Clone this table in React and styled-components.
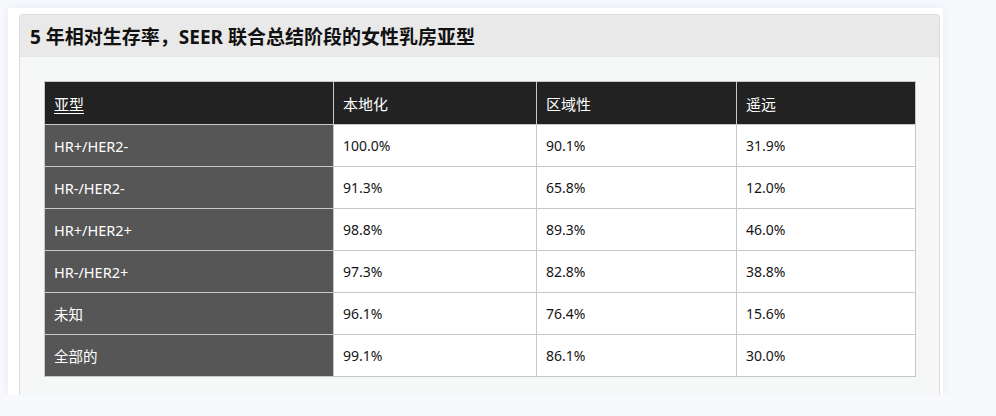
import React from 'react'
import styled, { createGlobalStyle } from 'styled-components'

const GlobalStyle = createGlobalStyle`
	body {
		margin: 0;
		background: #f8f9fd;
		font-family: "Noto Sans", "Noto Sans CJK SC", sans-serif;
	}
`

const Page = styled.div`
	padding: 8px 0 0 8px;
`

const Card = styled.div`
	width: 935px;
	box-sizing: border-box;
	background: #fff;
	padding: 6px 3px 0 11px;
	box-shadow: 0 0 8px rgba(200, 205, 220, 0.35);
`

const Panel = styled.div`
	border: 1px solid #dcdcdc;
	border-bottom: none;
	border-radius: 4px 4px 0 0;
	background: #f6f7f7;
`

const PanelHeader = styled.div`
	height: 42px;
	display: flex;
	align-items: center;
	padding: 0 10px;
	background: #e9e9e9;
	border-radius: 4px 4px 0 0;
`

const Title = styled.h3`
	margin: 0;
	font-size: 19px;
	font-weight: 700;
	color: #111;
	font-family: "Noto Sans", "Noto Sans CJK SC", sans-serif;
`

const PanelBody = styled.div`
	padding: 24px 24px 18px 24px;
`

const Table = styled.table`
	width: 871px;
	border-collapse: collapse;
	table-layout: fixed;
	border: 1px solid #c8c8c8;
`

const Th = styled.th`
	height: 42px;
	padding: 0 9px;
	text-align: left;
	font-weight: 400;
	font-size: 15px;
	color: #fff;
	background: #222;
	border: 1px solid #c8c8c8;
`

const HeadLink = styled.span`
	text-decoration: underline;
	text-underline-offset: 3px;
`

const Cell = styled.td`
	height: 41px;
	padding: 0 9px;
	font-size: ${p => (p.$label ? '14.5px' : '14px')};
	color: ${p => (p.$label ? '#fff' : '#151515')};
	background: ${p => (p.$label ? '#565656' : '#fff')};
	border: 1px solid #c8c8c8;
`

const columns = [289, 203, 200, 179]

const rows = [
	['HR+/HER2-', '100.0%', '90.1%', '31.9%'],
	['HR-/HER2-', '91.3%', '65.8%', '12.0%'],
	['HR+/HER2+', '98.8%', '89.3%', '46.0%'],
	['HR-/HER2+', '97.3%', '82.8%', '38.8%'],
	['未知', '96.1%', '76.4%', '15.6%'],
	['全部的', '99.1%', '86.1%', '30.0%'],
]

const App = () => {
	return (
		<>
			<GlobalStyle />
			<Page>
				<Card>
					<Panel>
						<PanelHeader>
							<Title>5 年相对生存率，SEER 联合总结阶段的女性乳房亚型</Title>
						</PanelHeader>
						<PanelBody>
							<Table>
								<colgroup>
									{columns.map((w, i) => <col key={i} style={{ width: w }} />)}
								</colgroup>
								<thead>
									<tr>
										<Th><HeadLink>亚型</HeadLink></Th>
										<Th>本地化</Th>
										<Th>区域性</Th>
										<Th>遥远</Th>
									</tr>
								</thead>
								<tbody>
									{rows.map(row => (
										<tr key={row[0]}>
											{row.map((v, i) => (
												<Cell key={i} $label={i === 0}>{v}</Cell>
											))}
										</tr>
									))}
								</tbody>
							</Table>
						</PanelBody>
					</Panel>
				</Card>
			</Page>
		</>
	)
}

export default App
